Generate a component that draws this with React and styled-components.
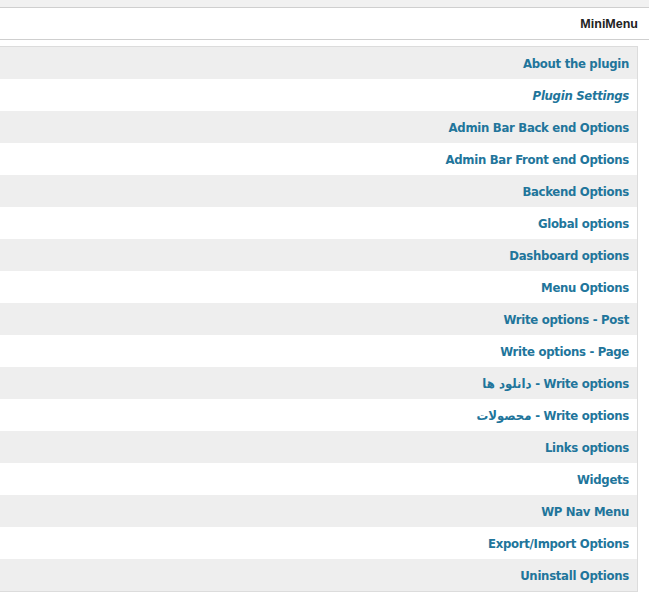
import React from "react";
import styled, { createGlobalStyle } from "styled-components";

const Global = createGlobalStyle`
  html, body { margin: 0; padding: 0; background: #fff; }
  body { font-family: "Liberation Sans", Arial, sans-serif; }
`;

const Page = styled.div`
  width: 649px;
  display: flex;
  flex-direction: column;
`;

const TopStrip = styled.div`
  height: 7px;
  background: #f1f1f1;
`;

const Header = styled.div`
  height: 31px;
  border-top: 1px solid #cfcfcf;
  border-bottom: 1px solid #cfcfcf;
  background: #fff;
  display: flex;
  align-items: center;
  justify-content: flex-end;
  padding-right: 11px;
  font-family: "Liberation Sans", Arial, sans-serif;
  font-weight: bold;
  font-size: 12.5px;
  color: #222;
`;

const Panel = styled.ul`
  list-style: none;
  margin: 6px 11px 0 -1px;
  padding: 0;
  border: 1px solid #dcdcdc;
  direction: rtl;
`;

const Row = styled.li`
  height: 32px;
  display: flex;
  align-items: center;
  padding-right: 8px;
  background: ${(p) => (p.$shaded ? "#eeeeee" : "#ffffff")};
`;

const Link = styled.a`
  font-family: "DejaVu Sans Condensed", "DejaVu Sans", sans-serif;
  font-stretch: condensed;
  font-weight: bold;
  font-size: 13px;
  letter-spacing: -0.3px;
  color: #21759b;
  text-decoration: none;
  font-style: ${(p) => (p.$current ? "italic" : "normal")};
`;

const items = [
  "About the plugin",
  "Plugin Settings",
  "Admin Bar Back end Options",
  "Admin Bar Front end Options",
  "Backend Options",
  "Global options",
  "Dashboard options",
  "Menu Options",
  "Write options - Post",
  "Write options - Page",
  "Write options - دانلود ها",
  "Write options - محصولات",
  "Links options",
  "Widgets",
  "WP Nav Menu",
  "Export/Import Options",
  "Uninstall Options",
];

export default function App() {
  return (
    <>
      <Global />
      <Page>
        <TopStrip />
        <Header>MiniMenu</Header>
        <Panel>
          {items.map((t, i) => (
            <Row key={t} $shaded={i % 2 === 0}>
              <Link href="#" $current={i === 1}>{t}</Link>
            </Row>
          ))}
        </Panel>
      </Page>
    </>
  );
}
